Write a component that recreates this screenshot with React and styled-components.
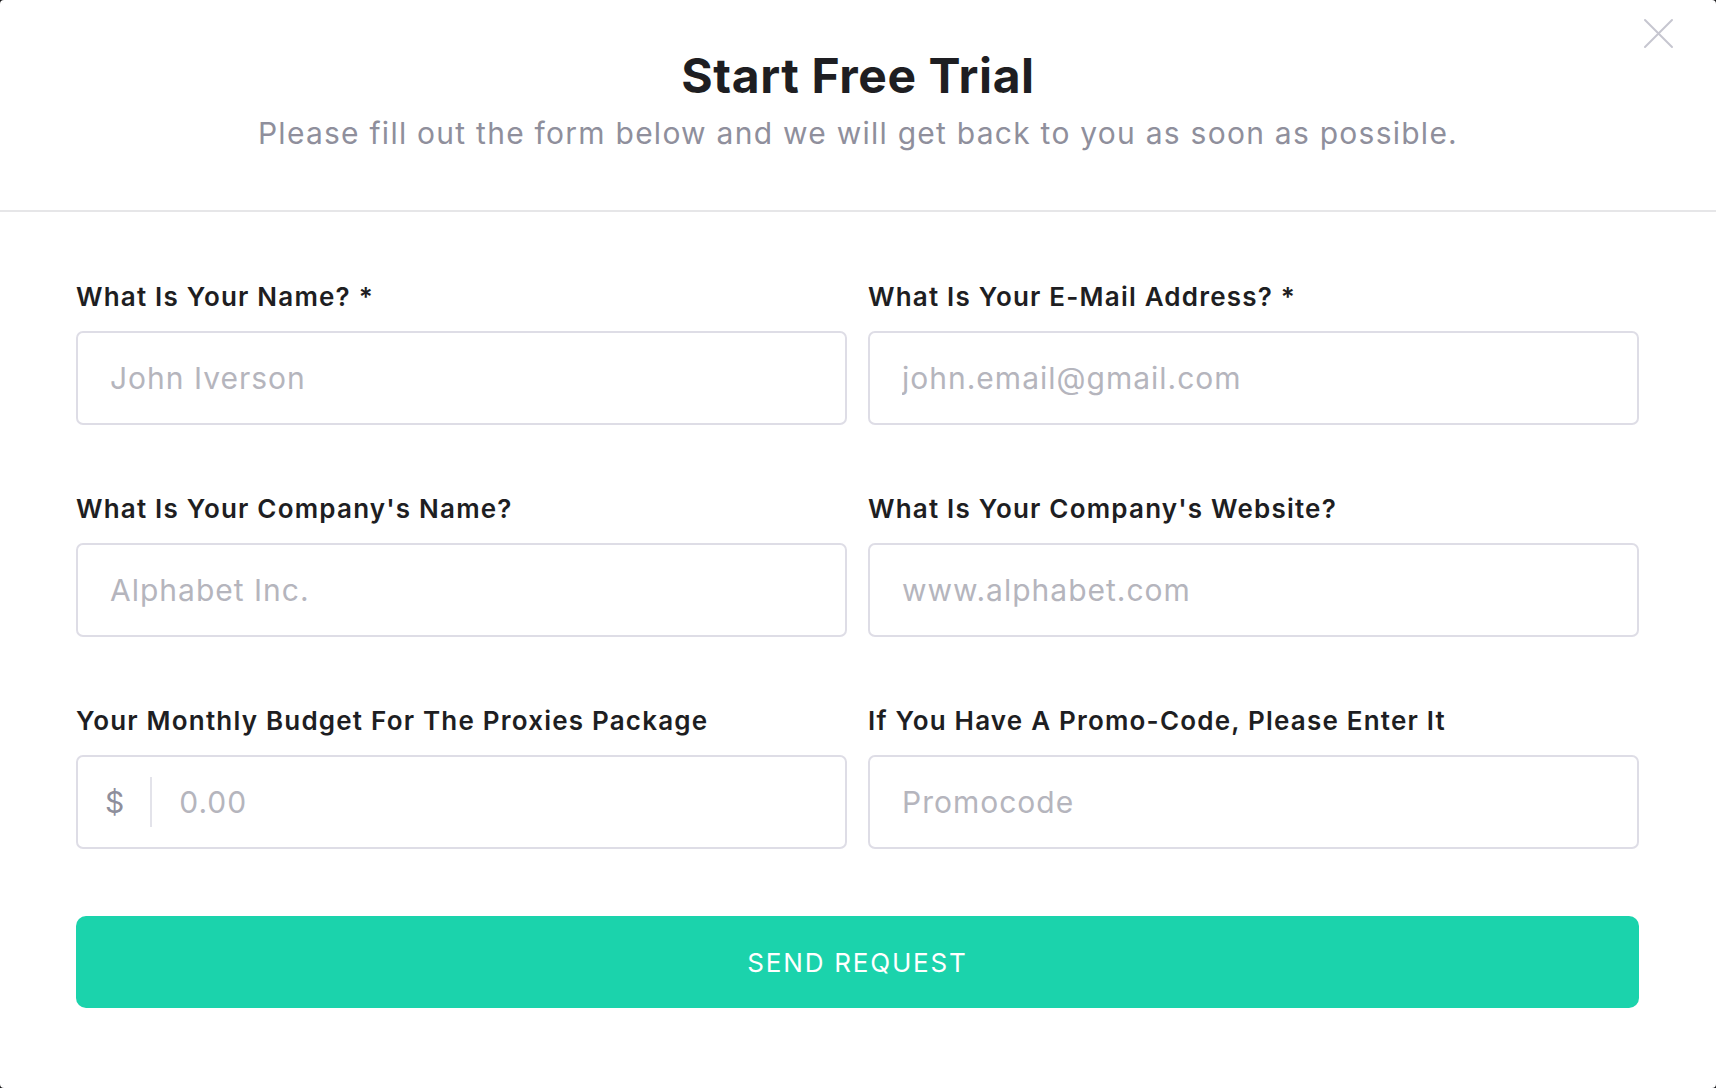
import React from 'react'
import styled, { createGlobalStyle } from 'styled-components'

const GlobalStyle = createGlobalStyle`
  * { box-sizing: border-box; }
  html, body {
    margin: 0;
    padding: 0;
    background: #141416;
  }
  body {
    font-family: Inter, "Noto Sans", sans-serif;
  }
`

const Modal = styled.div`
  position: relative;
  width: 1716px;
  height: 1088px;
  background: #fff;
  border-radius: 4px;
  overflow: hidden;
`

const Header = styled.header`
  height: 212px;
  padding-top: 43px;
  text-align: center;
  border-bottom: 2px solid #e6e6e8;
`

const Title = styled.h1`
  margin: 0;
  font-size: 48px;
  line-height: 66px;
  font-weight: 700;
  letter-spacing: 0.6px;
  color: #1e1e22;
`

const Subtitle = styled.p`
  margin: 0;
  margin-top: 4px;
  font-size: 30px;
  line-height: 40px;
  letter-spacing: 1.25px;
  color: #8f8f9c;
`

const CloseButton = styled.button`
  position: absolute;
  top: 18px;
  right: 42px;
  width: 31px;
  height: 31px;
  padding: 0;
  border: 0;
  background: none;
  cursor: pointer;
  display: flex;
  align-items: center;
  justify-content: center;
`

const Form = styled.form`
  padding: 70px 77px 0 76px;
`

const Grid = styled.div`
  display: grid;
  grid-template-columns: 1fr 1fr;
  column-gap: 21px;
  row-gap: 69px;
`

const Field = styled.div`
  display: flex;
  flex-direction: column;
`

const Label = styled.label`
  font-size: 26px;
  line-height: 30px;
  font-weight: 600;
  letter-spacing: 1.2px;
  color: #1e1e22;
  margin-bottom: 19px;
`

const InputBox = styled.div`
  height: 94px;
  border: 2px solid #dedde6;
  border-radius: 7px;
  display: flex;
  align-items: center;
  padding: 0 32px;
  padding-left: ${p => (p.$hasPrefix ? '27px' : '32px')};
`

const Prefix = styled.span`
  font-size: 30px;
  color: #8f8f9c;
  padding-right: 26px;
  margin-right: 27px;
  height: 50px;
  display: flex;
  align-items: center;
  border-right: 2px solid #e3e3ea;
`

const Input = styled.input`
  flex: 1;
  min-width: 0;
  border: 0;
  outline: none;
  background: transparent;
  font-family: inherit;
  font-size: 30px;
  letter-spacing: 1px;
  color: #1e1e22;
  padding: 0;
  &::placeholder {
    color: #b5b5bd;
  }
`

const SubmitButton = styled.button`
  display: block;
  width: 100%;
  height: 92px;
  margin-top: 67px;
  border: 0;
  border-radius: 10px;
  background: #1bd3ac;
  color: #fff;
  font-family: inherit;
  font-size: 26px;
  letter-spacing: 1.8px;
  cursor: pointer;
`

const fields = [
  { label: 'What Is Your Name? *', placeholder: 'John Iverson' },
  { label: 'What Is Your E-Mail Address? *', placeholder: 'john.email@gmail.com' },
  { label: "What Is Your Company's Name?", placeholder: 'Alphabet Inc.' },
  { label: "What Is Your Company's Website?", placeholder: 'www.alphabet.com' },
  { label: 'Your Monthly Budget For The Proxies Package', placeholder: '0.00', prefix: '$' },
  { label: 'If You Have A Promo-Code, Please Enter It', placeholder: 'Promocode' },
]

export default function App() {
  return (
    <>
      <GlobalStyle />
      <Modal>
        <Header>
          <Title>Start Free Trial</Title>
          <Subtitle>Please fill out the form below and we will get back to you as soon as possible.</Subtitle>
        </Header>
        <CloseButton aria-label="Close">
          <svg width="31" height="31" viewBox="0 0 31 31">
            <path d="M2 2 L29 29 M29 2 L2 29" stroke="#c6c6d0" strokeWidth="2" strokeLinecap="round" />
          </svg>
        </CloseButton>
        <Form onSubmit={e => e.preventDefault()}>
          <Grid>
            {fields.map((f, i) => (
              <Field key={i}>
                <Label>{f.label}</Label>
                <InputBox $hasPrefix={!!f.prefix}>
                  {f.prefix && <Prefix>{f.prefix}</Prefix>}
                  <Input placeholder={f.placeholder} />
                </InputBox>
              </Field>
            ))}
          </Grid>
          <SubmitButton type="submit">SEND REQUEST</SubmitButton>
        </Form>
      </Modal>
    </>
  )
}
